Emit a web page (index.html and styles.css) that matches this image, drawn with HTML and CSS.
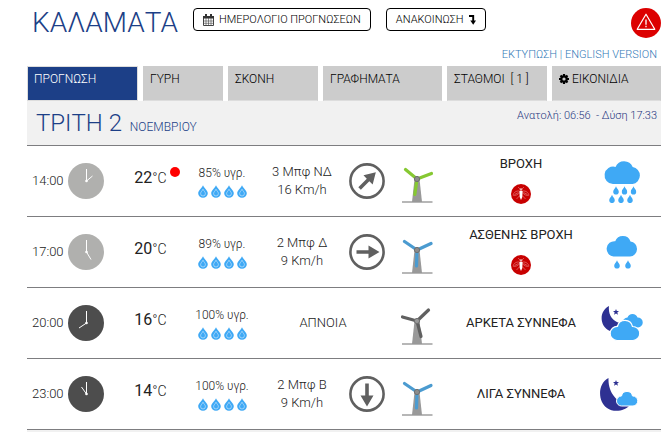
FILE: index.html
```html
<!doctype html>
<html lang="el">
<head>
    <meta charset="utf-8">
    <title>Καλαμάτα - Πρόγνωση καιρού</title>
    <link rel="stylesheet" href="styles.css">
</head>
<body>
    <!-- icons -->
    <svg class="defs" width="0" height="0">
        <symbol id="drop" viewBox="0 0 10 13">
            <path d="M5 0.3C6 3 9.8 5.5 9.8 8.2A4.8 4.6 0 0 1 0.2 8.2C0.2 5.5 4 3 5 0.3Z" fill="#3fa9f5"/>
            <path d="M5 4.2C5.5 5.6 7.4 7 7.4 8.6A2.4 2.4 0 0 1 2.6 8.6C2.6 7 4.5 5.6 5 4.2Z" fill="#3fa9f5" stroke="#b4dcfa" stroke-width="0.8"/>
        </symbol>
        <symbol id="rain" viewBox="0 0 6 9">
            <path d="M3 0.3C3.6 2.2 5.8 3.8 5.8 5.8A2.8 2.8 0 0 1 0.2 5.8C0.2 3.8 2.4 2.2 3 0.3Z" fill="#3fa9f5"/>
        </symbol>
        <symbol id="arrow" viewBox="0 0 36 36">
            <circle cx="18" cy="18" r="16.6" fill="none" stroke="#606060" stroke-width="2.6"/>
            <path d="M7.5 16.2H19.5V11.5L30.5 18L19.5 24.5V19.8H7.5Z" fill="#606060"/>
        </symbol>
        <symbol id="tower" viewBox="0 0 34 44">
            <path d="M14.5 20H19.5L22 43H12Z" fill="#999"/>
            <path d="M2 43H32.5" stroke="#999" stroke-width="1.4"/>
        </symbol>
        <symbol id="turbine-low" viewBox="0 0 34 44">
            <use href="#tower"/>
            <path d="M17 20L4.5 11.5M17 20L31 13.5M17 20L16.5 36" stroke="#4b9bd0" stroke-width="3.2" stroke-linecap="round"/>
            <circle cx="17" cy="20" r="2.6" fill="#8c8c8c" stroke="#6e6e6e"/>
        </symbol>
        <symbol id="mosquito" viewBox="0 0 20 20">
            <circle cx="10" cy="10" r="10" fill="#c80000"/>
            <path d="M8.5 7C5 6.5 2 9 2.3 11.3C4 12 7.5 10.5 8.8 8.5M11.5 7C15 6.5 18 9 17.7 11.3C16 12 12.5 10.5 11.2 8.5M8.8 11.5L5.5 15M11.2 11.5L14.5 15M9 5L7 3M11 5L13 3M3.5 10.5L7.5 8.5M16.5 10.5L12.5 8.5" fill="none" stroke="#e58a8a" stroke-width="0.6"/>
            <path d="M8.4 7H11.6L11.3 13L10 16L8.7 13Z" fill="#fff"/>
            <circle cx="10" cy="5.5" r="1.3" fill="#eeb0b0"/>
        </symbol>
        <symbol id="star" viewBox="0 0 6 6">
            <path d="M3 0L3.8 2H6L4.3 3.4L5 5.7L3 4.4L1 5.7L1.7 3.4L0 2H2.2Z" fill="#2e3192"/>
        </symbol>
    </svg>

    <div class="page">
        <header class="top">
            <h1>ΚΑΛΑΜΑΤΑ</h1>
            <button type="button" class="btn">
                <svg width="11" height="12" viewBox="0 0 11 12"><path d="M0.5 2.5H10.5V11.5H0.5Z" fill="#fff" stroke="#444"/><path d="M0 2H11V4.5H0ZM2 0H4V3H2ZM7 0H9V3H7Z" fill="#333"/><path d="M3 4V12M5.5 4V12M8 4V12M0 7H11M0 9.3H11" stroke="#444" stroke-width="0.6"/></svg>
                <span>ΗΜΕΡΟΛΟΓΙΟ ΠΡΟΓΝΩΣΕΩΝ</span>
            </button>
            <button type="button" class="btn">
                <span>ΑΝΑΚΟΙΝΩΣΗ</span>
                <svg width="7" height="10" viewBox="0 0 7 10"><path d="M0 1H4.2V6" fill="none" stroke="#000" stroke-width="1.9"/><path d="M1.3 5.5H7L4.2 9.8Z"/></svg>
            </button>
            <a href="#" class="alert" aria-label="Προειδοποίηση">
                <svg width="30" height="30" viewBox="0 0 30 30"><circle cx="15" cy="15" r="15" fill="#dc0000"/><path d="M15 6.2L23.8 21.3H6.2Z" fill="none" stroke="#fff" stroke-width="1.2" stroke-linejoin="round"/><path d="M15 11.5V16.7M15 17.8V19.2" stroke="#fff" stroke-width="1.3"/></svg>
            </a>
        </header>
        <div class="links"><a href="#">ΕΚΤΥΠΩΣΗ</a> | <a href="#">ENGLISH VERSION</a></div>

        <nav class="tabs">
            <a href="#" class="active">ΠΡΟΓΝΩΣΗ</a>
            <a href="#">ΓΥΡΗ</a>
            <a href="#">ΣΚΟΝΗ</a>
            <a href="#">ΓΡΑΦΗΜΑΤΑ</a>
            <a href="#">ΣΤΑΘΜΟΙ &nbsp;[ 1 ]</a>
            <a href="#"><svg width="10" height="10" viewBox="0 0 10 10"><path d="M5 0V10M0 5H10M1.5 1.5L8.5 8.5M8.5 1.5L1.5 8.5" stroke="#000" stroke-width="2.2"/><circle cx="5" cy="5" r="3.8"/><circle cx="5" cy="5" r="1.6" fill="#ccc"/></svg> ΕΙΚΟΝΙΔΙΑ</a>
        </nav>

        <div class="day">
            <h2>ΤΡΙΤΗ 2 <small>ΝΟΕΜΒΡΙΟΥ</small></h2>
            <span class="sun">Ανατολή: 06:56 &nbsp;- Δύση 17:33</span>
        </div>

        <table class="forecast">
            <colgroup>
                <col class="c-time"><col class="c-temp"><col class="c-hum"><col class="c-wind">
                <col class="c-dir"><col class="c-turb"><col class="c-desc"><col class="c-icon">
            </colgroup>
            <tr>
                <td><div class="time">14:00 <svg width="36" height="36" viewBox="0 0 36 36"><circle cx="18" cy="18" r="18" fill="#b0b0ae"/><path d="M18.5 6V18L24.5 13" fill="none" stroke="#fff"/><circle cx="18.5" cy="18" r="1.3" fill="#fff"/></svg></div></td>
                <td><div class="temp">22<small>°C</small><i class="hot"></i></div></td>
                <td class="hum">85% υγρ.<div class="drops"><svg><use href="#drop"/></svg><svg><use href="#drop"/></svg><svg><use href="#drop"/></svg><svg><use href="#drop"/></svg></div></td>
                <td>3 Μπφ ΝΔ<br>16 Km/h</td>
                <td><svg width="36" height="36" viewBox="0 0 36 36"><use href="#arrow" transform="rotate(-45 18 18)"/></svg></td>
                <td><svg width="34" height="44" viewBox="0 0 34 44"><use href="#tower"/><path d="M17 20L5.5 10.5M17 20L31.5 14.5M17 20L14.8 35.5" stroke="#86c832" stroke-width="3.2" stroke-linecap="round"/><circle cx="17" cy="20" r="2.6" fill="#8c8c8c" stroke="#6e6e6e"/></svg></td>
                <td class="desc">ΒΡΟΧΗ<svg class="bug"><use href="#mosquito"/></svg></td>
                <td class="sky"><svg width="44" height="44" viewBox="0 0 44 44">
                    <path d="M13 25A8.7 8.7 0 1 1 15.5 7.9A9.3 9.3 0 0 1 32.7 8A8.6 8.6 0 0 1 32.5 25Z" fill="#3fa9f5"/>
                    <use href="#rain" x="13" y="27" width="6" height="9"/><use href="#rain" x="21.5" y="27" width="6" height="9"/><use href="#rain" x="30.5" y="27" width="6" height="9"/>
                    <use href="#rain" x="9" y="35.5" width="6" height="9"/><use href="#rain" x="18" y="35.5" width="6" height="9"/><use href="#rain" x="27" y="35.5" width="6" height="9"/>
                </svg></td>
            </tr>
            <tr>
                <td><div class="time">17:00 <svg width="36" height="36" viewBox="0 0 36 36"><circle cx="18" cy="18" r="18" fill="#b0b0ae"/><path d="M18.5 6V18L23 25.5" fill="none" stroke="#fff"/><circle cx="18.5" cy="18" r="1.3" fill="#fff"/></svg></div></td>
                <td><div class="temp">20<small>°C</small></div></td>
                <td class="hum">89% υγρ.<div class="drops"><svg><use href="#drop"/></svg><svg><use href="#drop"/></svg><svg><use href="#drop"/></svg><svg><use href="#drop"/></svg></div></td>
                <td>2 Μπφ Δ<br>9 Km/h</td>
                <td><svg width="36" height="36" viewBox="0 0 36 36"><use href="#arrow"/></svg></td>
                <td><svg width="34" height="44"><use href="#turbine-low"/></svg></td>
                <td class="desc">ΑΣΘΕΝΗΣ ΒΡΟΧΗ<svg class="bug"><use href="#mosquito"/></svg></td>
                <td class="sky"><svg width="44" height="44" viewBox="0 0 44 44">
                    <path d="M13.5 26.5A7.6 7.6 0 1 1 15.2 11.2A8.2 8.2 0 0 1 30.5 11.4A7.6 7.6 0 0 1 30 26.5Z" fill="#3fa9f5"/>
                    <use href="#rain" x="14" y="30" width="6" height="9"/><use href="#rain" x="25" y="30" width="6" height="9"/>
                </svg></td>
            </tr>
            <tr>
                <td><div class="time">20:00 <svg width="36" height="36" viewBox="0 0 36 36"><circle cx="18" cy="18" r="18" fill="#4d4d4d"/><path d="M18.5 6V18L11 23" fill="none" stroke="#fff"/><circle cx="18.5" cy="18" r="1.3" fill="#fff"/></svg></div></td>
                <td><div class="temp">16<small>°C</small></div></td>
                <td class="hum">100% υγρ.<div class="drops"><svg><use href="#drop"/></svg><svg><use href="#drop"/></svg><svg><use href="#drop"/></svg><svg><use href="#drop"/></svg></div></td>
                <td colspan="2">ΑΠΝΟΙΑ</td>
                <td><svg width="34" height="44" viewBox="0 0 34 44"><use href="#tower"/><path d="M17 20L2.5 16M17 20L28.5 9M17 20L21 35.5" stroke="#606060" stroke-width="3.2" stroke-linecap="round"/><circle cx="17" cy="20" r="2.6" fill="#999" stroke="#6e6e6e"/></svg></td>
                <td class="desc">ΑΡΚΕΤΑ ΣΥΝΝΕΦΑ</td>
                <td class="sky"><svg width="44" height="44" viewBox="0 0 44 44">
                    <path d="M9 5C-1 10 -1 25 10 30L20 22C12 20 8 13 9 5Z" fill="#2e3192"/>
                    <use href="#star" x="13" y="8" width="6" height="6"/>
                    <path d="M28 27A5 5 0 0 1 27.5 16.5A5.3 5.3 0 0 1 37.5 16.5A5 5 0 0 1 38 26.5Z" fill="#3fa9f5"/>
                    <path d="M17 39.5A7 7 0 0 1 17.5 25.3A7.7 7.7 0 0 1 32.5 25.5A7 7 0 0 1 33 39.5Z" fill="#3fa9f5" stroke="#fff" stroke-width="1.2"/>
                </svg></td>
            </tr>
            <tr>
                <td><div class="time">23:00 <svg width="36" height="36" viewBox="0 0 36 36"><circle cx="18" cy="18" r="18" fill="#4d4d4d"/><path d="M18.5 6V18L13.5 11" fill="none" stroke="#fff"/><circle cx="18.5" cy="18" r="1.3" fill="#fff"/></svg></div></td>
                <td><div class="temp">14<small>°C</small></div></td>
                <td class="hum">100% υγρ.<div class="drops"><svg><use href="#drop"/></svg><svg><use href="#drop"/></svg><svg><use href="#drop"/></svg><svg><use href="#drop"/></svg></div></td>
                <td>2 Μπφ Β<br>9 Km/h</td>
                <td><svg width="36" height="36" viewBox="0 0 36 36"><use href="#arrow" transform="rotate(90 18 18)"/></svg></td>
                <td><svg width="34" height="44"><use href="#turbine-low"/></svg></td>
                <td class="desc">ΛΙΓΑ ΣΥΝΝΕΦΑ</td>
                <td class="sky"><svg width="44" height="44" viewBox="0 0 44 44">
                    <path d="M8.5 6C-3 12 -2 30 7 36C14 41 25 39 30 33C17 31 8 21 8.5 6Z" fill="#2e3192"/>
                    <use href="#star" x="13" y="8" width="6" height="6"/>
                    <path d="M21.5 34A5 5 0 0 1 21.5 24A5.6 5.6 0 0 1 32.5 24A5 5 0 0 1 33 34Z" fill="#3fa9f5" stroke="#fff"/>
                </svg></td>
            </tr>
        </table>
        <div class="rest"></div>
    </div>
</body>
</html>
```
FILE: styles.css
```css
* {
    box-sizing: border-box;
}
body {
    margin: 0;
    background: #fff;
    font-family: Roboto, "Liberation Sans", sans-serif;
    font-size: 13px;
    font-weight: 300;
    line-height: 18px;
    color: #222;
}
a {
    text-decoration: none;
    color: inherit;
}
.defs {
    position: absolute;
}
.page {
    min-height: 100vh;
    display: flex;
    flex-direction: column;
    padding: 8px 11px 0 27px;
}

/* header */
.top {
    display: flex;
    align-items: flex-start;
    gap: 15px;
    padding-left: 5px;
}
h1 {
    margin: 0;
    font-size: 28px;
    line-height: 30px;
    font-weight: 300;
    color: #1c3f87;
}
.btn {
    display: flex;
    align-items: center;
    gap: 5px;
    height: 23px;
    padding: 0 9px;
    border: 1px solid #000;
    border-radius: 4px;
    background: #fff;
    font: inherit;
    font-size: 11px;
    color: #000;
}
.alert {
    margin-left: auto;
    height: 30px;
}
.alert svg {
    display: block;
}
.links {
    padding: 8px 4px 2px 0;
    text-align: right;
    font-size: 11px;
    color: #337ab7;
}

/* tabs */
.tabs {
    display: grid;
    grid-template-columns: 111fr 80fr 90fr 119fr 100fr 109fr;
    gap: 5px;
}
.tabs a {
    height: 35px;
    padding: 3px 6px;
    border: 1px solid #ccc;
    border-bottom-color: #ddd;
    background: #ccc;
    font-size: 12px;
    color: #000;
    white-space: nowrap;
}
.tabs .active {
    border-color: #ddd;
    background: #1c3f87;
    color: #fff;
}
.tabs svg {
    vertical-align: -1px;
}

/* day */
.day {
    display: flex;
    justify-content: space-between;
    height: 45px;
    padding: 6px 4px 0 9px;
    border-bottom: 1px solid #7d7d80;
    background: #f1f1f1;
    color: #27367f;
}
h2 {
    margin: 0;
    font-size: 24px;
    line-height: 32px;
    font-weight: 300;
    color: #1c3f87;
}
h2 small {
    margin-left: 2px;
    font-size: 12px;
}
.sun {
    font-size: 11px;
}

/* forecast rows */
.forecast {
    width: 100%;
    table-layout: fixed;
    border-spacing: 0;
}
.c-time { width: 88px; }
.c-temp { width: 71px; }
.c-hum { width: 72px; }
.c-wind { width: 88px; }
.c-dir { width: 42px; }
.c-turb { width: 58px; }
.c-icon { width: 65px; }
.forecast td {
    height: 71px;
    padding: 0;
    border-bottom: 1px solid #7d7d80;
    text-align: center;
    vertical-align: middle;
}
.forecast svg {
    display: block;
    margin: 0 auto;
}
.time {
    display: flex;
    align-items: center;
    gap: 4px;
    padding-left: 5px;
}
.forecast .time svg {
    margin: 0;
}
.temp {
    position: relative;
    padding-bottom: 6px;
    font-size: 16px;
    font-weight: 400;
}
.temp small {
    font-size: 14px;
    font-weight: 300;
}
.hot {
    position: absolute;
    top: -2px;
    right: 6px;
    width: 10px;
    height: 10px;
    border-radius: 50%;
    background: #f00;
}
.forecast .hum {
    font-size: 12px;
}
.drops {
    display: flex;
    justify-content: center;
    gap: 3px;
    padding: 3px 0 1px;
}
.forecast .drops svg {
    width: 10px;
    height: 13px;
    margin: 0;
}
.forecast .desc {
    font-weight: 400;
}
.forecast .bug {
    width: 20px;
    height: 20px;
    margin: 11px auto 4px;
}
.forecast .sky {
    padding-right: 13px;
}

/* start of the next day */
.rest {
    flex: 1;
    background: #f1f1f1;
}
```
